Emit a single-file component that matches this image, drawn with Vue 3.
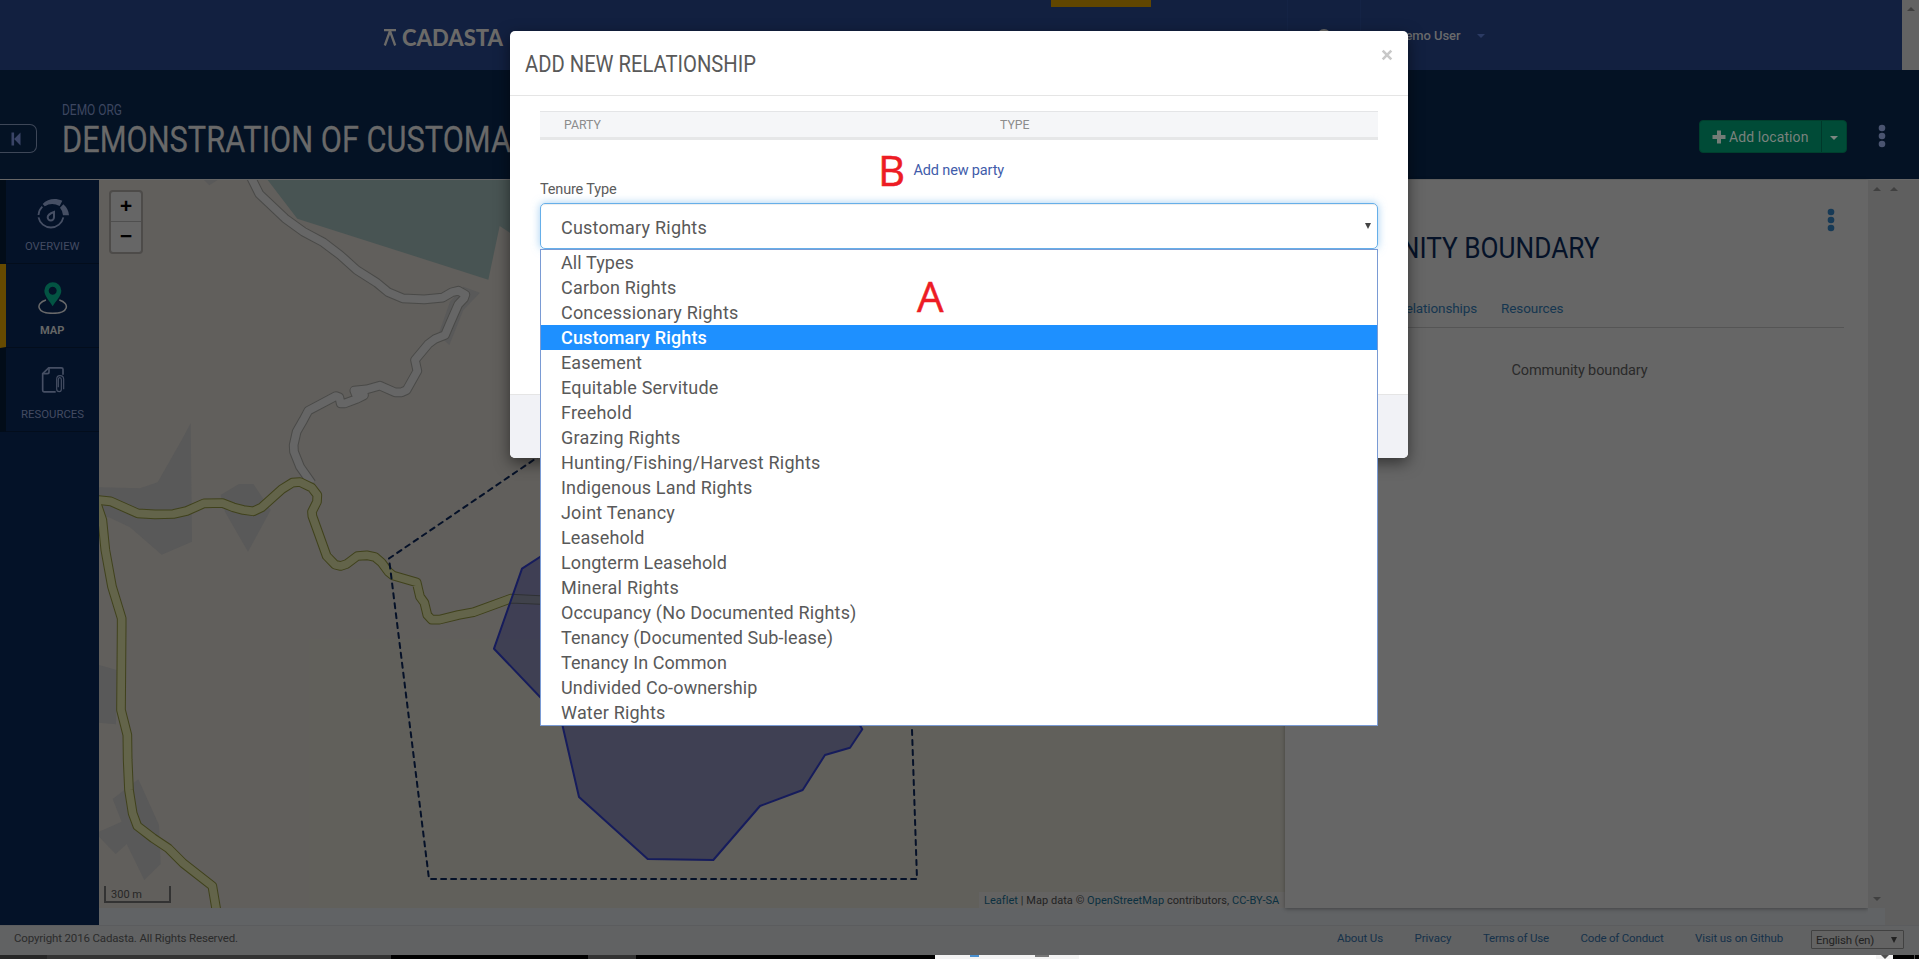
<script setup>
const applyFit = (el, { value, arg }) => {
  const natural = el.getBoundingClientRect().width
  if (arg === 'track') {
    el.style.letterSpacing = `${(value - natural) / el.textContent.length}px`
  } else {
    el.style.transform = `scaleX(${value / natural})`
    el.style.marginRight = `${value - natural}px`
  }
}
const vFit = { mounted: applyFit }

const options = [
  ['All Types', 73],
  ['Carbon Rights', 115.5],
  ['Concessionary Rights', 177.5],
  ['Customary Rights', 146],
  ['Easement', 81],
  ['Equitable Servitude', 157.5],
  ['Freehold', 71],
  ['Grazing Rights', 119.5],
  ['Hunting/Fishing/Harvest Rights', 259.5],
  ['Indigenous Land Rights', 191.5],
  ['Joint Tenancy', 114],
  ['Leasehold', 83.5],
  ['Longterm Leasehold', 166],
  ['Mineral Rights', 118],
  ['Occupancy (No Documented Rights)', 295.5],
  ['Tenancy (Documented Sub-lease)', 272],
  ['Tenancy In Common', 166],
  ['Undivided Co-ownership', 196.5],
  ['Water Rights', 104.5],
]
const selected = 'Customary Rights'

const footerLinks = [
  ['About Us', 46],
  ['Privacy', 37],
  ['Terms of Use', 66],
  ['Code of Conduct', 83],
  ['Visit us on Github', 88],
]
</script>

<template>
  <div class="page">
    <header class="topbar">
      <div class="brand">
        <svg width="14" height="17" viewBox="0 0 14 17"><path d="M1 1.2H13M7 2L1.8 16.5M7 2L12.2 16.5" fill="none" stroke="#6b6a68" stroke-width="2.3" /></svg>
        <b v-fit="101" class="fit">CADASTA</b>
      </div>
      <i class="marker"></i>
      <i class="rule rule-a"></i>
      <i class="rule rule-b"></i>
      <i class="lens"></i>
      <div class="user"><span v-fit:track="63.500" class="fit">Demo User</span><i class="caret-down"></i></div>
      <div class="gutter"><i class="arrow-up"></i></div>
    </header>

    <section class="project">
      <div class="collapse">
        <svg width="10" height="14" viewBox="0 0 10 14"><path d="M0.5 0.5h2.6v13H0.5zM9.5 0.5v13L3.1 7z" fill="#3a4466" /></svg>
      </div>
      <div class="heading">
        <div class="org"><span v-fit="60" class="fit">DEMO ORG</span></div>
        <div class="title"><span v-fit="449" class="fit">DEMONSTRATION OF CUSTOMA</span></div>
      </div>
      <div class="actions">
        <div class="add">
          <span class="add-main">
            <svg width="14" height="14" viewBox="0 0 14 14"><path d="M5 .5h4V5h4.5v4H9v4.500H5V9H.5V5H5z" fill="#747c77" /></svg>
            <span v-fit:track="79.500" class="fit">Add location</span>
          </span>
          <span class="add-more"><i class="caret-down light"></i></span>
        </div>
        <svg class="dots" width="8" height="24" viewBox="0 0 8 24"><g fill="#4a5470"><circle cx="4" cy="4" r="3.300" /><circle cx="4" cy="12" r="3.300" /><circle cx="4" cy="20" r="3.300" /></g></svg>
      </div>
    </section>

    <main class="body">
      <nav class="rail">
        <div class="rail-item">
          <svg width="93" height="50" viewBox="18 30 279 150" fill="none" stroke="#464f64">
            <path d="M115.500 142A38 38 0 0 0 190 142" stroke-width="5.500" />
            <path d="M115.500 135A38 38 0 0 1 127 110" stroke-width="5.500" />
            <path d="M128 102C143 85 167 83 187 92L179 108C162 99 148 100 134 109Z" fill="#464f64" stroke="none" />
            <path d="M190 103L180 113Q188 122 189 136H207Q206 117 190 103Z" fill="#464f64" stroke="none" />
            <path d="M162 126Q143 133 143 142A9.500 9.500 0 1 0 162 142Z" stroke-width="6" />
          </svg>
          <span v-fit="54.500" class="fit">OVERVIEW</span>
        </div>
        <div class="rail-item active">
          <svg width="93" height="50" viewBox="18 282 279 150">
            <path d="M138 390C105 400 110 430 158 430C206 430 211 400 178 390" fill="none" stroke="#69696a" stroke-width="4.500" />
            <path d="M158 409C150 394 133 378 133 362A25.500 25 0 0 1 184 362C184 378 166 394 158 409ZM158 350a12 12 0 1 0 .1 0Z" fill="#035443" fill-rule="evenodd" />
          </svg>
          <span v-fit="24.500" class="fit">MAP</span>
        </div>
        <div class="rail-item">
          <svg width="93" height="50" viewBox="18 534 279 150" fill="none" stroke="#464f64" stroke-width="5">
            <path d="M167 665.500H132Q128 665.500 128 661V611L146 593.500H184Q189 593.500 189 598V614" />
            <path d="M129 611H142Q147 611 147 606V594" />
            <path d="M175 652V629Q175 623 179 623Q184 623 184 629V658Q184 665 178 665Q170 665 170 657V628Q170 617 180 617Q191 617 191 628V658" stroke-width="3.500" />
          </svg>
          <span v-fit="63" class="fit">RESOURCES</span>
        </div>
      </nav>

      <div class="map-col">
        <div class="map">
          <svg class="canvas" width="1186" height="728" viewBox="99 180 1186 728">
            <rect x="99" y="180" width="1186" height="728" fill="#615f5c" />
            <path d="M309 639H1285V908H309Z" fill="#61605b" />
            <g transform="translate(90 170) scale(.33333)">
              <path d="M533 30L622 146L1195 329L1229 168L1300 215V30Z" fill="#485453" />
              <path d="M1120 350L1170 368L1120 420L1078 525L1045 495L1080 395ZM342 30H383L358 46Z" fill="#595959" />
            </g>
            <g transform="translate(90 440) scale(.33333)" fill="#595959">
              <path d="M27 142L150 145L203 127L275 0L302 -50L306 305L215 344L120 262L60 233L27 225Z" />
              <path d="M392 165L447 132H490L542 210L474 335L405 215Z" />
              <path d="M27 675L80 690L78 853L27 848Z" />
              <path d="M145 1018L207 1155L212 1272L163 1320L110 1212L77 1242L27 1190V1175L95 1145L68 1077Z" />
            </g>
            <g transform="translate(90 170) scale(.33333)" fill="none" stroke-linejoin="round">
              <path v-for="s in [['#4a4a48', 29], ['#666666', 23]]" :key="s[1]" :stroke="s[0]" :stroke-width="s[1]" d="M482 20L508 72L585 145L640 185L700 217L750 255L800 300L860 338L895 367L938 385L1003 388L1058 383L1085 367L1105 362L1126 374L1122 385L1105 403L1080 460L1065 495L1035 507L1015 522L975 570L982 603L950 660L935 667H915L870 647L830 658L793 662L797 672L822 676L800 687L765 700H752L748 682L738 678L655 722L640 750L620 785L611 825L612 845L630 890L665 940" />
            </g>
            <g transform="translate(90 440) scale(.33333)" fill="none" stroke-linejoin="round">
              <g v-for="s in [['#40421c', 29], ['#63644a', 23]]" :key="s[1]" :stroke="s[0]" :stroke-width="s[1]">
                <path d="M20 180L62 184L143 220L195 223L250 222L290 213L342 190L397 189L430 202L460 210L490 214L515 202L575 148L607 128L630 126L665 143L682 165L681 185L666 215L667 228L710 348L735 374L752 378L770 372L802 348L830 346L855 351L875 368L895 395L910 407L980 427L990 470L1003 488L1012 525L1025 539H1048L1105 525L1150 517L1262 476L1350 480L1500 486" />
                <path d="M20 190L37 240L46 330L66 440L95 535V560L93 810L112 885L113 960L117 1050L128 1120L142 1158L190 1195L235 1225L280 1270L367 1338L380 1415" />
              </g>
            </g>
            <path d="M494 648.700L522 568.700L560 544H800L845 700L862.300 729.300L850 747.700L825 755L802.700 790L760 806L713.300 860L647.700 859L579 797L561 719Z" fill="#1d204c" fill-opacity=".5" stroke="#161c5c" stroke-width="2" stroke-linejoin="round" />
            <path d="M911 700L917 879H429L389 558.500L560 442" fill="none" stroke="#051128" stroke-width="2" stroke-linecap="round" stroke-dasharray="5 5" />
          </svg>
          <div class="zoom"><span>+</span><span>−</span></div>
          <div class="scale"><span v-fit:track="31" class="fit">300 m</span></div>
          <div class="credit"><span v-fit:track="295" class="fit"><em>Leaflet</em> | Map data © <em>OpenStreetMap</em> contributors, <em>CC-BY-SA</em></span></div>
        </div>
      </div>

      <aside class="panel">
        <svg class="panel-dots" width="8" height="24" viewBox="0 0 8 24"><g fill="#173a56"><circle cx="4" cy="4" r="3.300" /><circle cx="4" cy="12" r="3.300" /><circle cx="4" cy="20" r="3.300" /></g></svg>
        <h2><span v-fit="296.500" class="fit">COMMUNITY BOUNDARY</span></h2>
        <div class="tabs">
          <span v-fit:track="79.500" class="fit">Relationships</span>
          <span v-fit:track="62.500" class="fit">Resources</span>
        </div>
        <p><span v-fit:track="136" class="fit">Community boundary</span></p>
      </aside>
      <div class="gutters">
        <div class="g1"><i class="arrow-up"></i><i class="arrow-down"></i></div>
        <div class="g2"><i class="arrow-up"></i></div>
      </div>
    </main>

    <footer class="footer">
      <span v-fit:track="224" class="fit copy">Copyright 2016 Cadasta. All Rights Reserved.</span>
      <div class="links">
        <span v-for="l in footerLinks" :key="l[0]" v-fit:track="l[1]" class="fit">{{ l[0] }}</span>
      </div>
      <div class="lang"><span v-fit:track="58" class="fit">English (en)</span><i class="tri"></i></div>
    </footer>
    <svg class="strip" width="1919" height="4" viewBox="0 0 1919 4">
      <path d="M0 0H1919V4H0Z" fill="#000" />
      <path d="M0 0H47V4H0Z" fill="#262626" />
      <path d="M47 0H391V4H47ZM588 0H636V4H588Z" fill="#333" />
      <path d="M935 0H1079V4H935ZM1876 0H1893V4H1876Z" fill="#f3f3f3" />
      <path d="M1079 0H1876V4H1079Z" fill="#fff" />
      <path d="M970 0H979V2H970Z" fill="#4a90d0" />
      <path d="M1035 0H1049V2H1035Z" fill="#777" />
      <path d="M1881 0H1889L1885 4Z" fill="#505050" />
      <path d="M1914 0H1915V4H1914Z" fill="#555" />
    </svg>

    <div class="modal">
      <div class="modal-head">
        <span v-fit="231" class="fit">ADD NEW RELATIONSHIP</span>
        <svg class="close" width="12" height="12" viewBox="0 0 12 12"><path d="M1.700 1.700L10.300 10.300M10.300 1.700L1.700 10.300" stroke="#c8c8c8" stroke-width="2.600" /></svg>
      </div>
      <div class="modal-body">
        <div class="thead"><span><b v-fit="37" class="fit">PARTY</b></span><span><b v-fit="29.500" class="fit">TYPE</b></span></div>
        <div class="new-party"><span class="mark">B</span><a v-fit:track="90.500" class="fit">Add new party</a></div>
        <label><span v-fit:track="76.500" class="fit">Tenure Type</span></label>
        <div class="select"><span v-fit:track="146" class="fit">Customary Rights</span><i class="tri"></i></div>
        <div class="menu">
          <div v-for="o in options" :key="o[0]" class="option" :class="{ on: o[0] === selected }"><span v-fit:track="o[1]" class="fit">{{ o[0] }}</span></div>
          <span class="mark mark-a">A</span>
        </div>
      </div>
      <div class="modal-foot"></div>
    </div>
  </div>
</template>

<style>
body { margin: 0; overflow: hidden; }
</style>

<style scoped>
* { box-sizing: border-box; }
.page { position: relative; width: 1919px; height: 959px; overflow: hidden; background: #616365; font-family: Roboto, "Liberation Sans", sans-serif; color: #2b2b2b; display: flex; flex-direction: column; }
.fit { display: inline-block; white-space: pre; transform-origin: 0 50%; }
svg { display: block; flex: none; }

.topbar { position: relative; height: 70px; flex: none; background: #122040; }
.brand { display: flex; align-items: center; gap: 5px; padding: 22px 0 0 383px; height: 52px; }
.brand b { font: 900 23px/30px Lato, sans-serif; color: #6b6a68; }
.marker { position: absolute; left: 1051px; top: 0; width: 100px; height: 7px; background: #614600; }
.rule { position: absolute; top: 0; width: 1px; height: 70px; background: #142345; }
.rule-a { left: 1287px; }
.rule-b { left: 1360px; }
.lens { position: absolute; left: 1317px; top: 29px; width: 14px; height: 14px; border-radius: 50%; background: #6b6a68; }
.user { position: absolute; left: 1397px; top: 26px; display: flex; align-items: center; gap: 16px; font-size: 13px; font-weight: 500; line-height: 20px; color: #696a6c; }
.caret-down { width: 0; height: 0; border: 4px solid transparent; border-top-color: #2b3a63; border-bottom: 0; }
.caret-down.light { border-top-color: #7c8681; }
.gutter { position: absolute; right: 0; top: 0; width: 17px; height: 70px; background: #636363; display: flex; justify-content: center; padding-top: 7px; }
.arrow-up { width: 0; height: 0; border: 4px solid transparent; border-bottom-color: #404040; border-top: 0; }
.arrow-down { width: 0; height: 0; border: 4px solid transparent; border-top-color: #404040; border-bottom: 0; }

.project { position: relative; height: 110px; flex: none; background: #041224; border-bottom: 1px solid #666; display: flex; align-items: flex-start; }
.collapse { width: 37px; height: 29px; margin-top: 54px; border: 1px solid #3e4758; border-left: 0; border-radius: 0 7px 7px 0; display: flex; align-items: center; padding-left: 11px; }
.heading { padding: 30px 0 0 24.500px; width: 473px; }
.org { font-size: 14px; line-height: 20px; color: #3d4660; }
.title { font-size: 37px; line-height: 40px; color: #696969; white-space: nowrap; -webkit-text-stroke: 0.3px #696969; }
.actions { margin-left: auto; display: flex; align-items: center; padding: 50px 33px 0 0; gap: 31px; }
.add { width: 148px; height: 33px; border-radius: 4px; background: #004b37; border: 1px solid #003f2d; display: flex; font-size: 14px; color: #7a827e; }
.add-main { flex: 1; display: flex; align-items: center; gap: 3px; padding-left: 12px; }
.add-more { width: 25px; border-left: 1px solid #00382a; display: flex; align-items: center; justify-content: center; padding-top: 2px; }
.dots { margin-top: -1px; }

.body { height: 745px; flex: none; display: flex; }
.rail { width: 99px; background: #041228; display: flex; flex-direction: column; }
.rail-item { height: 84px; border-left: 6px solid #020c18; border-bottom: 1px solid #030d1c; display: flex; flex-direction: column; align-items: center; }
.rail-item span { font-size: 11.500px; line-height: 16px; margin-top: 8px; color: #434b62; }
.rail-item.active { border-left-color: #664a00; }
.rail-item.active span { font-weight: 700; color: #656666; }
.map-col { width: 1186px; }
.map { position: relative; width: 1186px; height: 728px; overflow: hidden; }
.zoom { position: absolute; left: 10px; top: 10px; width: 34px; height: 64px; border: 2px solid #4d4b49; border-radius: 4px; background: #666; display: flex; flex-direction: column; }
.zoom span { height: 30px; font: 700 21px/32px "Liberation Mono", monospace; text-align: center; color: #000; }
.zoom span:first-child { border-bottom: 1px solid #4f4f4f; }
.scale { position: absolute; left: 5px; top: 706px; width: 67px; height: 17px; border: 2px solid #333; border-top: 0; padding-left: 5px; font-size: 11px; line-height: 17px; color: #262626; }
.credit { position: absolute; right: 0; bottom: 0; width: 306px; height: 16px; background: #646362; padding-left: 5px; font-size: 11px; line-height: 17px; color: #222; }
.credit em { font-style: normal; color: #0b3040; }
.panel { position: relative; width: 583px; height: 728px; background: #666; box-shadow: 0 1px 4px #00000055; }
.panel-dots { position: absolute; left: 542px; top: 28px; }
.panel h2 { margin: 0; padding: 48px 0 0 18px; font-size: 30px; font-weight: 400; line-height: 40px; color: #051228; }
.tabs { display: flex; gap: 24px; margin-top: 28px; margin-right: 24px; height: 32px; padding-left: 112.500px; border-bottom: 1px solid #555; font-size: 13.500px; line-height: 25px; color: #153650; }
.panel p { margin: 33px 0 0 226.500px; font-size: 14.500px; line-height: 20px; color: #2a2a2a; }
.gutters { position: relative; flex: 1; display: flex; background: #5f5f5f; }
.g1, .g2 { width: 17px; display: flex; flex-direction: column; justify-content: space-between; align-items: center; padding: 7px 0; }
.g1 { height: 728px; box-shadow: 0 17px 0 #616365; }

.footer { height: 30px; flex: none; border-top: 1px solid #5b5c5e; background: #616263; display: flex; align-items: flex-start; padding: 0 15px 0 14px; font-size: 11.500px; line-height: 24px; }
.copy { color: #2b2b2b; }
.links { margin-left: auto; display: flex; gap: 31.500px; color: #15314a; margin-right: 28px; }
.lang { width: 93px; height: 19px; margin-top: 4px; border: 1px solid #414141; border-radius: 1px; background: #636363; display: flex; align-items: center; justify-content: space-between; padding: 0 6px 0 4px; line-height: 20px; color: #222; }
.tri { width: 0; height: 0; border-left: 3px solid transparent; border-right: 3px solid transparent; border-top: 6px solid #222; }
.strip { flex: none; }

.modal { position: absolute; left: 510px; top: 31px; width: 898px; height: 427px; border-radius: 5px; background: #fff; box-shadow: 0 5px 15px #00000080; display: flex; flex-direction: column; }
.modal-head { height: 65px; flex: none; border-bottom: 1px solid #e5e5e5; padding: 3px 15px 0 15px; display: flex; justify-content: space-between; font-size: 23px; line-height: 62px; color: #595959; }
.close { margin-top: 15px; }
.modal-body { flex: 1; padding: 15px 30px 0; }
.thead { height: 29px; background: #f5f6f8; border-top: 1px solid #e4e5e7; border-bottom: 3px solid #e6e7e8; display: flex; padding-left: 24px; font-size: 12.500px; line-height: 25px; color: #8c8c8c; }
.thead span { flex: none; width: 436px; }
.thead span + span { width: 360px; }
.thead b { font-weight: 400; }
.new-party { height: 40px; display: flex; align-items: flex-start; padding-left: 337px; font-size: 14.500px; line-height: 20px; color: #3f5caa; padding-top: 21px; position: relative; }
.new-party a { margin-left: 36.500px; }
.mark { position: absolute; left: 338px; top: 0; font: 42px/60px "Open Sans", "Noto Sans", sans-serif; color: #ed1c24; -webkit-text-stroke: 0.5px #ed1c24; }
label { display: block; height: 23px; font-size: 14.500px; line-height: 20px; color: #5c5c5c; }
.select { height: 46px; border: 1px solid #66afe9; border-radius: 5px; box-shadow: 0 0 8px #66afe999, inset 0 1px 1px #00000013; display: flex; align-items: center; justify-content: space-between; padding: 3px 6px 0 20px; font-size: 18px; line-height: 24px; color: #595959; }
.select .tri { margin-top: -4px; border-top-color: #444; }
.menu { position: relative; z-index: 2; border: 1px solid #7a9bd4; background: #fff; }
.option { height: 25px; line-height: 25px; font-size: 18px; padding-left: 20px; color: #595959; }
.option.on { background: #1e90ff; color: #fff; font-weight: 500; }
.mark-a { left: 376px; top: 16px; }
.modal-foot { position: absolute; left: 0; right: 0; bottom: 0; height: 64px; border-top: 1px solid #e5e5e5; background: #f1f2f6; border-radius: 0 0 5px 5px; }
</style>
